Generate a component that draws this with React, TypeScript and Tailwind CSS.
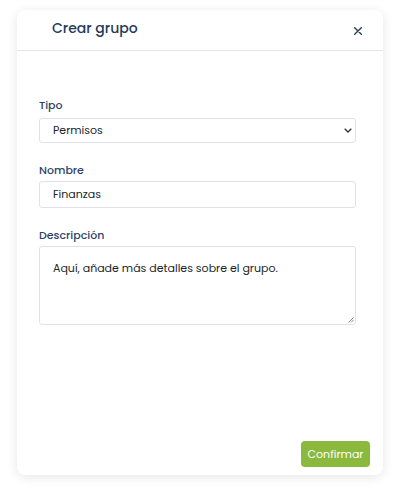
import React from "react";

export default function App() {
  const font = { fontFamily: "Poppins, 'Noto Sans', sans-serif" };
  return (
    <div className="w-[400px] h-[501px] bg-white pt-[10px] pl-[17px]" style={font}>
      <div className="w-[366px] h-[465px] bg-white rounded-[8px] shadow-[0_2px_12px_rgba(0,0,0,0.10)] flex flex-col">
        <div className="h-[41px] flex items-center justify-between pl-[35px] pr-[21px] border-b border-[#e4e6ea]">
          <span className="text-[14px] text-[#243b5a] font-medium -mt-[4px]">Crear grupo</span>
          <svg width="8" height="8" viewBox="0 0 8 8" className="mt-[2px]">
            <path d="M0.7 0.7 L7.3 7.3 M7.3 0.7 L0.7 7.3" stroke="#2c3e5d" strokeWidth="1.4" strokeLinecap="round" />
          </svg>
        </div>
        <div className="flex flex-col pl-[22px] pr-[27px] pt-[46px] flex-1">
          <label className="text-[11px] text-[#2d4468] font-medium leading-[16px] mb-[5px]">Tipo</label>
          <div className="h-[25px] border border-[#dfe2e6] rounded-[3px] flex items-center justify-between pl-[13px] pr-[3px] text-[11px] text-[#212529]">
            <span>Permisos</span>
            <svg width="8" height="5" viewBox="0 0 8 5">
              <path d="M0.7 0.7 L4 4 L7.3 0.7" stroke="#333" strokeWidth="1.3" fill="none" />
            </svg>
          </div>
          <label className="text-[11px] text-[#2d4468] font-medium leading-[16px] mt-[19px] mb-[3px]">Nombre</label>
          <div className="h-[27px] border border-[#dfe2e6] rounded-[3px] flex items-center pl-[13px] text-[11px] text-[#212529]">
            Finanzas
          </div>
          <label className="text-[11px] text-[#2d4468] font-medium leading-[16px] mt-[19px] mb-[3px]">Descripción</label>
          <div className="relative h-[79px] border border-[#dfe2e6] rounded-[3px] pl-[13px] pt-[13px] text-[11px] leading-[16px] text-[#212529]">
            Aquí, añade más detalles sobre el grupo.
            <svg width="6" height="6" viewBox="0 0 6 6" className="absolute right-[1px] bottom-[1px]">
              <path d="M5.5 0.5 L0.5 5.5 M5.5 3 L3 5.5" stroke="#888" strokeWidth="1" />
            </svg>
          </div>
          <div className="flex-1" />
          <div className="flex justify-end pb-[8px] -mr-[14px]">
            <button className="h-[26px] w-[69px] rounded-[4px] bg-[#8ab93e] text-white text-[11px] leading-none">Confirmar</button>
          </div>
        </div>
      </div>
    </div>
  );
}
